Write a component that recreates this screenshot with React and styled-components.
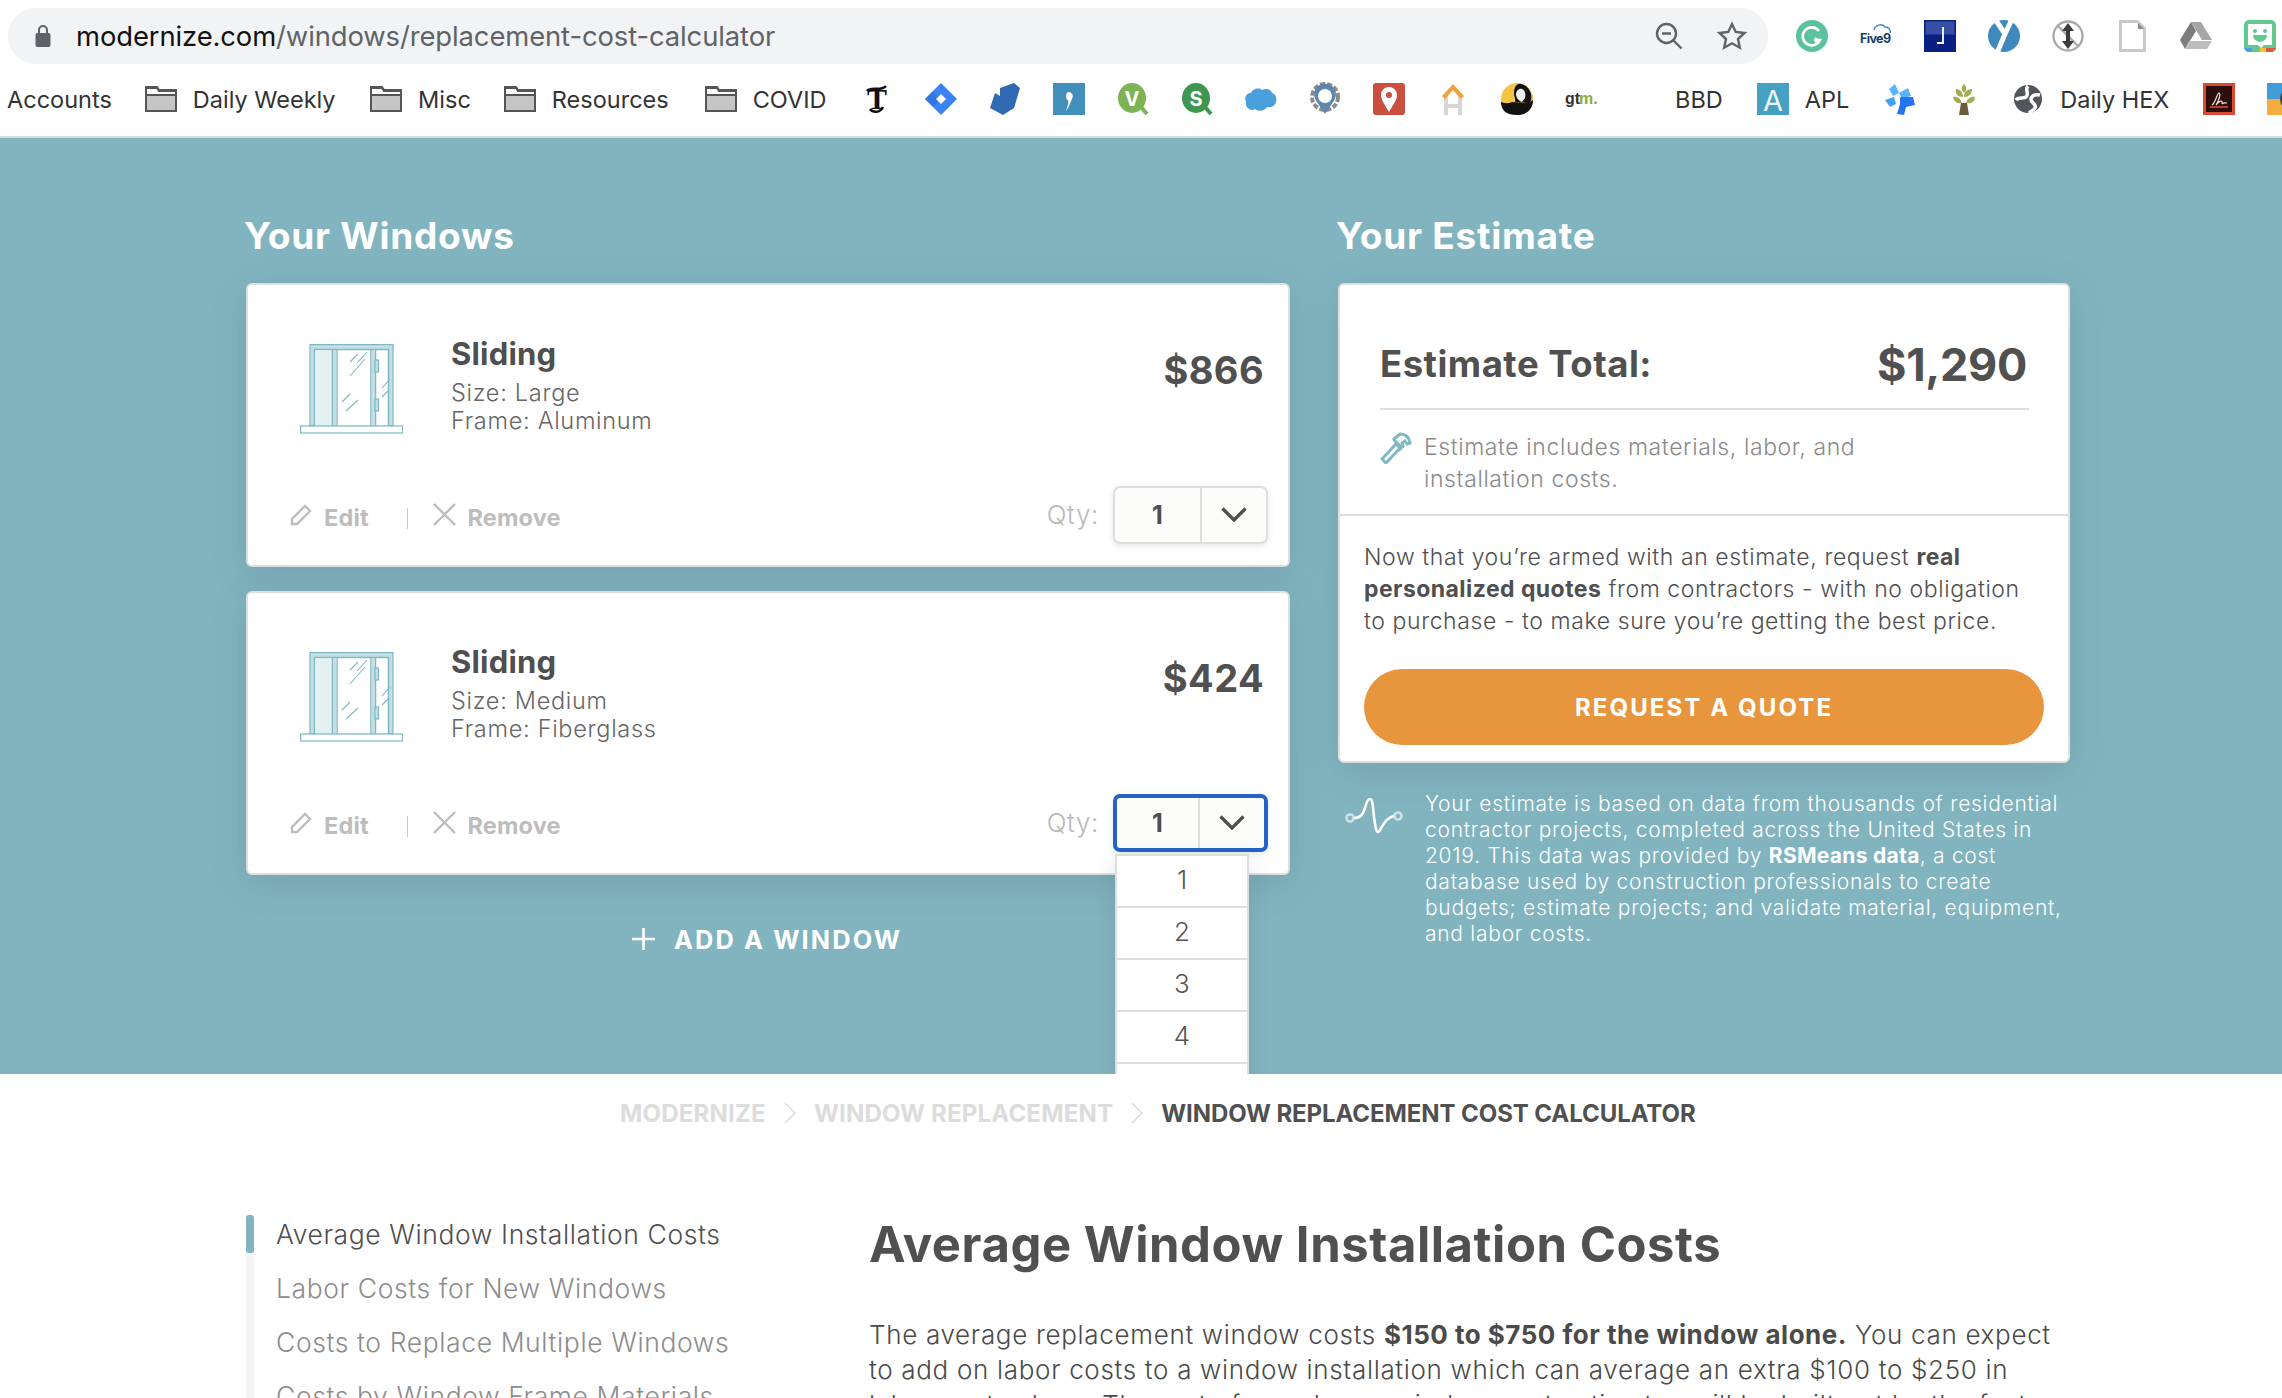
import React from "react";
import styled, { createGlobalStyle } from "styled-components";

const Global = createGlobalStyle`
  html, body { margin: 0; padding: 0; background: #fff; }
  body { width: 2282px; height: 1398px; overflow: hidden; font-family: Inter, "Liberation Sans", sans-serif; }
  * { box-sizing: border-box; }
`;

const Page = styled.div`width: 2282px; height: 1398px; overflow: hidden; display: flex; flex-direction: column;`;

/* browser chrome */
const Chrome = styled.header`height: 138px; flex: none; border-bottom: 2px solid #d9dcdd; background: #fff; display: flex; flex-direction: column;`;
const Toolbar = styled.div`height: 72px; display: flex; align-items: center; padding-left: 8px;`;
const AddressBar = styled.div`width: 1760px; height: 56px; background: #f1f3f4; border-radius: 28px; display: flex; align-items: center; padding: 0 20px 0 27px;`;
const Url = styled.div`margin-left: 25px; flex: 1; font-size: 27.4px; letter-spacing: -0.1px; color: #5f6368; white-space: nowrap; span { color: #111; }`;
const BarTools = styled.div`display: flex; align-items: center; gap: 34px; margin-right: 1px;`;
const Extensions = styled.div`display: flex; align-items: center; gap: 32px; margin-left: 28px;`;
const Bookmarks = styled.nav`height: 56px; padding-bottom: 2px; display: flex; align-items: center; padding-left: 7px; gap: 32px; white-space: nowrap; font-size: 23.5px; color: #333;`;
const Bookmark = styled.div`display: flex; align-items: center; gap: 16px; margin-left: ${p => p.$ml || 0}px;`;
const Fav = styled.svg`width: 32px; height: 32px; flex: none; display: block; overflow: visible;`;

/* calculator */
const Hero = styled.section`height: 936px; flex: none; background: #81b4bf; overflow: hidden; padding: 74px 0 0 244px; display: grid; grid-template-columns: 1046px 734px; column-gap: 46px; align-content: start;`;
const SectionTitle = styled.h2`margin: 0 0 23px; color: #fff; font-size: 37px; line-height: 48px; font-weight: 700; letter-spacing: 0.75px;`;
const Column = styled.div`display: flex; flex-direction: column;`;
const Card = styled.article`height: 284px; margin: 0 0 24px 2px; background: #fff; border: 2px solid #dcdfe0; border-radius: 6px; box-shadow: 0 8px 36px rgba(60, 90, 100, 0.18); display: flex; flex-direction: column;`;
const CardTop = styled.div`display: flex; align-items: flex-start; padding: 51px 24px 0 52px;`;
const WindowIcon = styled.svg`width: 103px; height: 90px; margin-top: 8px; flex: none;`;
const CardInfo = styled.div`margin-left: 48px; flex: 1;`;
const CardName = styled.h3`margin: 0 0 7px; font-size: 31px; line-height: 36px; font-weight: 700; color: #4f4f4f; letter-spacing: 0.2px;`;
const Detail = styled.div`font-size: 23.5px; line-height: 28px; font-weight: 300; color: #666; letter-spacing: 0.7px;`;
const Price = styled.div`margin-top: 9px; font-size: 38px; line-height: 50px; font-weight: 700; color: #505050; letter-spacing: 0.4px;`;
const CardBottom = styled.div`margin-top: auto; height: 82px; padding: 0 20px 19px 42px; display: flex; align-items: center;`;
const Action = styled.div`display: flex; align-items: center; gap: 11px; font-size: 23.5px; font-weight: 700; color: #bdbdbd; letter-spacing: 0.2px; padding-top: 5px;`;
const ActionIcon = styled.svg`width: 23px; height: 23px; flex: none; margin-top: -5px;`;
const Pipe = styled.span`width: 1.5px; height: 21px; background: #c8c8c8; margin: 7px 25px 0 38px;`;
const Qty = styled.div`margin-left: auto; font-size: 26px; font-weight: 300; color: #b9b9b9; letter-spacing: 0.6px; margin-right: 14px;`;
const SelectWrap = styled.div`position: relative; width: 155px; height: 58px; flex: none;`;
const Select = styled.div`width: 100%; height: 100%; display: grid; grid-template-columns: 1fr 64px; background: #fcfcfb; border-radius: 7px; border: ${p => (p.$focus ? "4px solid #2563c4" : "2px solid #dedede")}; box-shadow: 0 2px 6px rgba(0,0,0,.1); overflow: hidden;`;
const SelectValue = styled.div`display: flex; align-items: center; justify-content: center; border-right: 2px solid #dedede; font-size: 25px; font-weight: 700; color: #4f4f4f;`;
const SelectCaret = styled.div`display: flex; align-items: center; justify-content: center;`;
const Menu = styled.ul`position: absolute; z-index: 5; top: 60px; left: 2px; width: 134px; margin: 0; padding: 0; list-style: none; background: #fff; border-left: 2px solid #dedede; border-right: 2px solid #dedede; border-top: 2px solid #dedede; box-shadow: 0 6px 20px rgba(60,90,100,.16);`;
const MenuItem = styled.li`height: 52px; padding-bottom: 2px; display: flex; align-items: center; justify-content: center; border-bottom: 2px solid #dedede; font-size: 26px; font-weight: 300; color: #555;`;
const AddWindow = styled.div`margin-top: 18px; display: flex; align-items: center; justify-content: center; gap: 19px; color: #fff; font-size: 25.3px; font-weight: 700; letter-spacing: 2.15px; height: 44px;`;

/* estimate */
const EstimateCard = styled.article`height: 480px; margin-left: 2px; background: #fff; border: 2px solid #dcdfe0; border-radius: 6px; box-shadow: 0 8px 36px rgba(60, 90, 100, 0.18); display: flex; flex-direction: column;`;
const EstimateHead = styled.div`height: 231px; flex: none; padding: 0 39px 0 40px; border-bottom: 2px solid #dedede;`;
const TotalRow = styled.div`height: 125px; padding-top: 35px; display: flex; align-items: center; justify-content: space-between; border-bottom: 2px solid #dedede; color: #505050;`;
const TotalLabel = styled.div`font-size: 36.5px; font-weight: 700; letter-spacing: 0.5px;`;
const TotalValue = styled.div`font-size: 45px; font-weight: 700; letter-spacing: -0.3px; margin-right: 2px;`;
const Note = styled.div`display: flex; gap: 12px; margin-top: 22px; font-size: 23px; line-height: 31.5px; font-weight: 300; color: #8a8a8a; letter-spacing: 0.6px;`;
const Hammer = styled.svg`width: 32px; height: 32px; flex: none;`;
const EstimateBody = styled.div`padding: 25px 16px 0 24px; flex: 1; display: flex; flex-direction: column;`;
const Pitch = styled.p`margin: 0; font-size: 23px; line-height: 32px; font-weight: 300; color: #4f4f4f; letter-spacing: 0.6px; white-space: nowrap; b { font-weight: 700; letter-spacing: 0.45px; }`;
const Cta = styled.div`margin-top: 32px; width: 680px; height: 76px; border-radius: 38px; background: #e8963e; color: #fff; display: flex; align-items: center; justify-content: center; font-size: 24px; font-weight: 700; letter-spacing: 2.1px;`;
const Footnote = styled.div`display: flex; margin: 28px 0 0 9px;`;
const Wave = styled.svg`width: 58px; height: 44px; flex: none; margin: 3px 22px 0 0;`;
const FootText = styled.p`margin: 0; color: #fff; font-size: 21px; line-height: 26px; font-weight: 300; letter-spacing: 0.73px; white-space: nowrap; b { font-weight: 700; letter-spacing: 0.3px; }`;

/* article */
const Crumbs = styled.nav`flex: none; height: 78px; padding-left: 620px; display: flex; align-items: center; font-size: 24px; font-weight: 700; letter-spacing: 0.2px; color: #dcdcdc; white-space: nowrap;`;
const CrumbNow = styled.span`color: #505050; letter-spacing: -0.08px;`;
const CrumbChevron = styled.svg`width: 14px; height: 24px; margin: 0 17px; flex: none;`;
const Article = styled.main`flex: none; display: grid; grid-template-columns: 623px 1200px; padding: 63px 0 0 246px;`;
const Toc = styled.ul`margin: 0; padding: 0 0 0 22px; list-style: none; border-left: 8px solid #f4f5f2; height: 300px; position: relative;`;
const TocAccent = styled.span`position: absolute; left: -8px; top: 0; width: 8px; height: 38px; background: #81b4bf; border-radius: 3px;`;
const TocItem = styled.li`height: 54px; line-height: 38px; font-size: 26.5px; font-weight: 300; letter-spacing: 0.6px; white-space: nowrap; color: ${p => (p.$active ? "#4f4f4f" : "#8d8d8d")};`;
const Heading = styled.h1`margin: 0 0 42px; font-size: 49px; line-height: 60px; font-weight: 700; color: #505050; letter-spacing: 0.55px; white-space: nowrap;`;
const Body = styled.p`margin: 0; font-size: 26px; line-height: 35px; font-weight: 300; color: #4a4a4a; letter-spacing: 0.68px; white-space: nowrap; b { font-weight: 700; letter-spacing: 0.5px; }`;

/* drawings */
const Folder = () => (
  <Fav viewBox="0 0 32 32">
    <path d="M1 4h11l2 3h17v21H1z" fill="#c6c6c6" stroke="#555" strokeWidth="2" />
    <path d="M1 5h11l2 3h17v4H1z" fill="#fff" stroke="#555" strokeWidth="2" />
  </Fav>
);

const favs = {
  nyt: <><text x="16" y="26" textAnchor="middle" fontFamily="'Liberation Serif', serif" fontWeight="700" fontSize="30" fill="#111">T</text><path d="M6 8c4-5 14 1 19-5M9 26c3 4 10 4 13-2" stroke="#111" strokeWidth="2.6" fill="none" /></>,
  jira: <><path d="M16 0 32 16 16 32 0 16z" fill="#3b82f6" /><path d="M16 0 0 16l8 8 8-8-8-8z" fill="#2f6fdc" opacity=".6" /><path d="M16 11l5 5-5 5-5-5z" fill="#fff" /></>,
  para: <><path d="M11 5 25 0l6 5-6 20-11 7-13-7L6 10l5 3z" fill="#2f6ab3" /></>,
  comma: <><rect width="32" height="32" fill="#428fbb" /><path d="M15 9c4 0 6 3 4 7-2 4-3 8-6 12 1-4 3-7 2-11-2 0-3-6 0-8z" fill="#fff" /></>,
  v: <><ellipse cx="15" cy="15" rx="14" ry="15" fill="#7eb257" /><path d="M24 24l6 7" stroke="#7eb257" strokeWidth="4" /><text x="15" y="23" textAnchor="middle" fontFamily="Inter, sans-serif" fontWeight="700" fontSize="20" fill="#fff">V</text></>,
  s: <><ellipse cx="15" cy="15" rx="14" ry="15" fill="#3f9650" /><path d="M24 24l6 7" stroke="#3f9650" strokeWidth="4" /><text x="15" y="23" textAnchor="middle" fontFamily="Inter, sans-serif" fontWeight="700" fontSize="20" fill="#fff">S</text></>,
  cloud: <path d="M8 27c-5 0-8-4-7-8-2-4 0-9 5-9 1-4 8-6 11-3 4-2 9-1 10 3 4 1 5 6 4 9-1 4-5 6-9 5-2 4-9 5-12 2z" fill="#4a9fdc" />,
  gear: <><circle cx="16" cy="14" r="13" fill="none" stroke="#8b8b8b" strokeWidth="4" strokeDasharray="5 2" /><circle cx="16" cy="14" r="10.5" fill="#fff" /><path d="M16 31L6.500 17a11 11 0 1 1 19 0z" fill="#5f86ac" /><circle cx="16" cy="13" r="7" fill="#fff" /></>,
  maps: <><rect width="32" height="32" rx="3" fill="#c94f40" /><path d="M16 29c-4-7-8-12-8-17a8 8 0 1 1 16 0c0 5-4 10-8 17z" fill="#fff" /><circle cx="16" cy="12" r="3" fill="#c94f40" /></>,
  house: <><path d="M9 13v19M23 13v19M9 23h14" stroke="#d6d6d6" strokeWidth="4" fill="none" /><path d="M5 13L16 1l11 12-3 3-8-9-8 9z" fill="#f0a03c" /></>,
  face: <><ellipse cx="16" cy="16" rx="16" ry="16" fill="#f3c542" /><path d="M0 19c6 2 9 1 11 0l16 1 5-3c0 9-6 15-16 15S0 28 0 19z" fill="#111" /><path d="M13 10c0-6 3-10 7-9 5 1 9 5 10 10 1 5 0 7-2 9l-14-1c1-3-1-5-1-9z" fill="#111" /><path d="M15 11c0-3 3-6 6-5s4 5 3 9l-3 4c-3-1-6-4-6-8z" fill="#eee" /></>,
  gtm: <><text x="0" y="21" fontFamily="'Liberation Sans', sans-serif" fontWeight="700" fontSize="16" fill="#333">gt</text><text x="14" y="21" fontFamily="'Liberation Sans', sans-serif" fontWeight="700" fontSize="16" fill="#8aaa3c">m.</text></>,
  apl: <><rect width="32" height="32" fill="#46a0c2" /><text x="16" y="28" textAnchor="middle" fontFamily="Inter, sans-serif" fontSize="29" fill="#fff" opacity=".9">A</text></>,
  puzzle: <><path d="M5 6l6-5 4 9 9-5 3 8-9 3-3-6-6 3z" fill="#58b4ff" /><path d="M1 17l9-3 2 7-6 3z" fill="#44a0f4" /><path d="M16 14l13 0 2 8-9 2-2 8-7-1 3-10z" fill="#2673f2" /></>,
  tree: <><path d="M16 1c3 3 3 6 0 9-3-3-3-6 0-9zM8 6c4 0 7 3 7 8-5 0-8-3-7-8zM24 6c0 5-3 8-8 8 0-5 3-8 8-8zM5 14c4-1 8 2 9 6-5 1-8-1-9-6zM27 14c0 5-4 7-9 6 1-4 5-7 9-6z" fill="#a4ac52" /><path d="M13 20h6l2 12h-10z" fill="#6d5a3d" /></>,
  globe: <><circle cx="16" cy="16" r="14" fill="#52555c" /><path d="M16 3c-4 4 2 7-2 11-2 2-8 0-10 3M28 12c-4-1-8 0-9 4s6 4 4 9c-1 2-4 3-6 5" fill="none" stroke="#fff" strokeWidth="3.5" /></>,
  acro: <><rect x="1.5" y="1.5" width="29" height="29" fill="#2b0f0c" stroke="#dd4a33" strokeWidth="3" /><path d="M9 22c4-3 5-12 7-12s0 8-3 12c5-6 7-4 6-1 2-2 3-1 5-1" stroke="#eedcd5" fill="none" strokeWidth="1.2" /><path d="M7 24h18" stroke="#dd4a33" strokeWidth="1.6" /></>,
  last: <><path d="M0 0h32v16H0z" fill="#419bd9" /><path d="M0 16h32v16H0z" fill="#f5ae3c" /><circle cx="26" cy="16" r="13" fill="#444" /><circle cx="26" cy="16" r="6" fill="#fff" /></>,
  gram: <><circle cx="16" cy="16" r="16" fill="#5cc29c" /><path d="M23 11a9 9 0 1 0 1 9h-6" fill="none" stroke="#fff" strokeWidth="2.6" /><path d="M19 17v6l5-3z" fill="#fff" /></>,
  five: <><path d="M14 10c1-5 8-7 11-3 4 0 6 3 5 6" fill="none" stroke="#3d88c8" strokeWidth="1.5" /><text x="0" y="23" fontFamily="Inter, sans-serif" fontWeight="700" fontSize="12.5" fill="#1c3e66" textLength="31">Five9</text></>,
  j: <><rect width="32" height="32" fill="#0a1f84" /><rect x="1.5" y="1.5" width="29" height="13" fill="#4a62b6" opacity=".7" /><path d="M19 7v16h-6" fill="none" stroke="#fff" strokeWidth="1.8" /></>,
  y: <><circle cx="16" cy="16" r="16" fill="#4089bf" /><path d="M7-1l10 15 7-15M17 14L9 33" stroke="#fff" strokeWidth="5" fill="none" /></>,
  arrows: <><circle cx="16" cy="16" r="14.5" fill="#fff" stroke="#aaa" strokeWidth="2.4" /><path d="M6 6l20 20" stroke="#aaa" strokeWidth="2.4" /><path d="M16 3l6 8h-4v10h4l-6 8-6-8h4V11h-4z" fill="#3c3c3c" /></>,
  doc: <><path d="M1.5 1.5h17l7 7v22h-24z" transform="translate(3 0)" fill="#fff" stroke="#c9c9c9" strokeWidth="3" /><path d="M22 3l6 6h-6z" fill="#8a8a8a" /></>,
  drive: <><path d="M11 2h10l11 18h-10z" fill="#a6a6a6" /><path d="M11 2L0 20l5 9 11-18z" fill="#7c7c7c" /><path d="M9 21h23l-5 8H5z" fill="#bdbdbd" /></>,
  smile: <><rect width="32" height="32" rx="5" fill="#62c98f" /><path d="M4 4h24v21h-8l-3 3-3-3H4z" fill="#fff" /><circle cx="11" cy="11" r="2" fill="#62c98f" /><circle cx="21" cy="11" r="2" fill="#62c98f" /><path d="M9 15h14c0 9-14 9-14 0z" fill="#62c98f" /><path d="M0 28h8v4H3z" fill="#4a9be8" /><path d="M16 28h6v4h-6z" fill="#f2c230" /><path d="M22 28h10v1l-3 3h-7z" fill="#e0583f" /></>,
};
const Icon = ({ name }) => <Fav viewBox="0 0 32 32">{favs[name]}</Fav>;

const WindowArt = () => (
  <WindowIcon viewBox="0 0 103 90" fill="none" stroke="#7fb7c3" strokeWidth="1.2">
    <rect x="10" y="0.6" width="83" height="81" fill="#c4dfe4" />
    <rect x="14.5" y="5.5" width="74" height="77" fill="#fff" strokeWidth="1.5" />
    <rect x="15.5" y="6.5" width="17" height="75" fill="#e4f0f2" stroke="none" />
    <path d="M32.5 5.5v77M37 5.500v77M71 5.500v77M75.500 5.500v77" strokeWidth="1.5" />
    <rect x="33" y="6" width="3.5" height="76" fill="#c4dfe4" stroke="none" />
    <rect x="71.500" y="6" width="3.5" height="76" fill="#c4dfe4" stroke="none" />
    <rect x="75" y="16" width="3.5" height="12" fill="#c4dfe4" />
    <rect x="75" y="55" width="3.5" height="12" fill="#c4dfe4" />
    <path d="M50 18l8-8M57 19l10-11M50 32l15-17M42 58l8-8M46 67l12-11M82 44l8-9M82 53l6-6" strokeWidth="1.1" />
    <rect x="0.6" y="82" width="102" height="7" fill="#fff" />
  </WindowIcon>
);

const Chevron = ({ color = "#505050" }) => (
  <svg width="26" height="15" viewBox="0 0 26 15" fill="none" stroke={color} strokeWidth="3.4"><path d="M1.500 1.500 13 13 24.500 1.500" /></svg>
);

const WindowCard = ({ size, frame, price, focus }) => (
  <Card>
    <CardTop>
      <WindowArt />
      <CardInfo>
        <CardName>Sliding</CardName>
        <Detail>Size: {size}</Detail>
        <Detail>Frame: {frame}</Detail>
      </CardInfo>
      <Price>{price}</Price>
    </CardTop>
    <CardBottom>
      <Action>
        <ActionIcon viewBox="0 0 23 23" fill="none" stroke="#bdbdbd" strokeWidth="2.4"><path d="M2 21v-5L15 3l5 5L7 21z" /></ActionIcon>
        Edit
      </Action>
      <Pipe />
      <Action>
        <ActionIcon viewBox="0 0 23 23" fill="none" stroke="#bdbdbd" strokeWidth="2.4"><path d="M1 1l21 21M22 1 1 22" /></ActionIcon>
        Remove
      </Action>
      <Qty>Qty:</Qty>
      <SelectWrap>
        <Select $focus={focus}>
          <SelectValue>1</SelectValue>
          <SelectCaret><Chevron /></SelectCaret>
        </Select>
        {focus && (
          <Menu>
            {["1", "2", "3", "4", ""].map((n, i) => <MenuItem key={i}>{n}</MenuItem>)}
          </Menu>
        )}
      </SelectWrap>
    </CardBottom>
  </Card>
);

const Crumb = () => (
  <CrumbChevron viewBox="0 0 14 24" fill="none" stroke="#dcdcdc" strokeWidth="1.6"><path d="M2 2l10 10L2 22" /></CrumbChevron>
);

export default function App() {
  return (
    <Page>
      <Global />
      <Chrome>
        <Toolbar>
          <AddressBar>
            <svg width="16" height="22" viewBox="0 0 16 22" fill="none"><rect x="0.5" y="8" width="15" height="14" rx="2" fill="#5f6368" /><path d="M4 9V5a4 4 0 0 1 8 0v4" stroke="#5f6368" strokeWidth="2" /></svg>
            <Url><span>modernize.com</span>/windows/replacement-cost-calculator</Url>
            <BarTools>
              <svg width="28" height="28" viewBox="0 0 28 28" fill="none" stroke="#5f6368" strokeWidth="2.4"><circle cx="11.5" cy="11.5" r="9.5" /><path d="M7 11.5h9M18.5 18.5l8 8" /></svg>
              <svg width="30" height="30" viewBox="0 0 30 30" fill="none" stroke="#5f6368" strokeWidth="2.4"><path d="M15 3l3.7 8 8.8 1-6.500 6 1.800 8.700L15 22.300 7.200 26.700 9 18l-6.500-6 8.800-1z" /></svg>
            </BarTools>
          </AddressBar>
          <Extensions>
            {["gram", "five", "j", "y", "arrows", "doc", "drive", "smile"].map(n => <Icon key={n} name={n} />)}
          </Extensions>
        </Toolbar>
        <Bookmarks>
          <Bookmark>Accounts</Bookmark>
          <Bookmark $ml={1}><Folder />Daily Weekly</Bookmark>
          <Bookmark $ml={2.5}><Folder />Misc</Bookmark>
          <Bookmark $ml={1}><Folder />Resources</Bookmark>
          <Bookmark $ml={4}><Folder />COVID</Bookmark>
          <Bookmark $ml={2.5}><Icon name="nyt" /></Bookmark>
          {["jira", "para", "comma", "v", "s", "cloud", "gear", "maps", "house", "face", "gtm"].map(n => <Icon key={n} name={n} />)}
          <Bookmark $ml={46}>BBD</Bookmark>
          <Bookmark $ml={2}><Icon name="apl" />APL</Bookmark>
          <Bookmark $ml={3}><Icon name="puzzle" /></Bookmark>
          <Icon name="tree" />
          <Icon name="globe" />
          <Bookmark $ml={-16}>Daily HEX</Bookmark>
          <Bookmark $ml={2}><Icon name="acro" /></Bookmark>
          <Icon name="last" />
        </Bookmarks>
      </Chrome>

      <Hero>
        <Column>
          <SectionTitle>Your Windows</SectionTitle>
          <WindowCard size="Large" frame="Aluminum" price="$866" />
          <WindowCard size="Medium" frame="Fiberglass" price="$424" focus />
          <AddWindow>
            <svg width="23" height="22" viewBox="0 0 23 22" fill="none" stroke="#fff" strokeWidth="2.6"><path d="M11.5 0v22M0 11h23" /></svg>
            ADD A WINDOW
          </AddWindow>
        </Column>
        <Column>
          <SectionTitle>Your Estimate</SectionTitle>
          <EstimateCard>
            <EstimateHead>
              <TotalRow>
                <TotalLabel>Estimate Total:</TotalLabel>
                <TotalValue>$1,290</TotalValue>
              </TotalRow>
              <Note>
                <Hammer viewBox="0 0 32 32" fill="none" stroke="#7fb7c3" strokeWidth="3">
                  <path d="M2 27l15-16 4 4L6 31z" />
                  <path d="M14 7l6-5c5 0 9 3 10 9l-3 1-2-3-3 2 1 3-3 3z" />
                </Hammer>
                <div>Estimate includes materials, labor, and<br />installation costs.</div>
              </Note>
            </EstimateHead>
            <EstimateBody>
              <Pitch>
                Now that you’re armed with an estimate, request <b>real</b><br />
                <b>personalized quotes</b> from contractors - with no obligation<br />
                to purchase - to make sure you’re getting the best price.
              </Pitch>
              <Cta>REQUEST A QUOTE</Cta>
            </EstimateBody>
          </EstimateCard>
          <Footnote>
            <Wave viewBox="0 0 58 44" fill="none" stroke="#fff" strokeWidth="2.6">
              <circle cx="5" cy="24" r="3.5" strokeOpacity=".6" />
              <circle cx="53" cy="22" r="3.5" strokeOpacity=".6" />
              <path d="M9 24c7 0 9-4 11-10 1-4 3-9 5-9 3 0 3 10 4 18 1 7 2 15 4 15 3 0 5-14 16-16" />
            </Wave>
            <FootText>
              Your estimate is based on data from thousands of residential<br />
              contractor projects, completed across the United States in<br />
              2019. This data was provided by <b>RSMeans data</b>, a cost<br />
              database used by construction professionals to create<br />
              budgets; estimate projects; and validate material, equipment,<br />
              and labor costs.
            </FootText>
          </Footnote>
        </Column>
      </Hero>

      <Crumbs>
        MODERNIZE<Crumb />WINDOW REPLACEMENT<Crumb /><CrumbNow>WINDOW REPLACEMENT COST CALCULATOR</CrumbNow>
      </Crumbs>

      <Article>
        <Toc>
          <TocAccent />
          <TocItem $active>Average Window Installation Costs</TocItem>
          <TocItem>Labor Costs for New Windows</TocItem>
          <TocItem>Costs to Replace Multiple Windows</TocItem>
          <TocItem>Costs by Window Frame Materials</TocItem>
        </Toc>
        <div>
          <Heading>Average Window Installation Costs</Heading>
          <Body>
            The average replacement window costs <b>$150 to $750 for the window alone.</b> You can expect<br />
            to add on labor costs to a window installation which can average an extra $100 to $250 in<br />
            labor costs alone. The rest of your home window cost estimates will be built out by the factors
          </Body>
        </div>
      </Article>
    </Page>
  );
}
